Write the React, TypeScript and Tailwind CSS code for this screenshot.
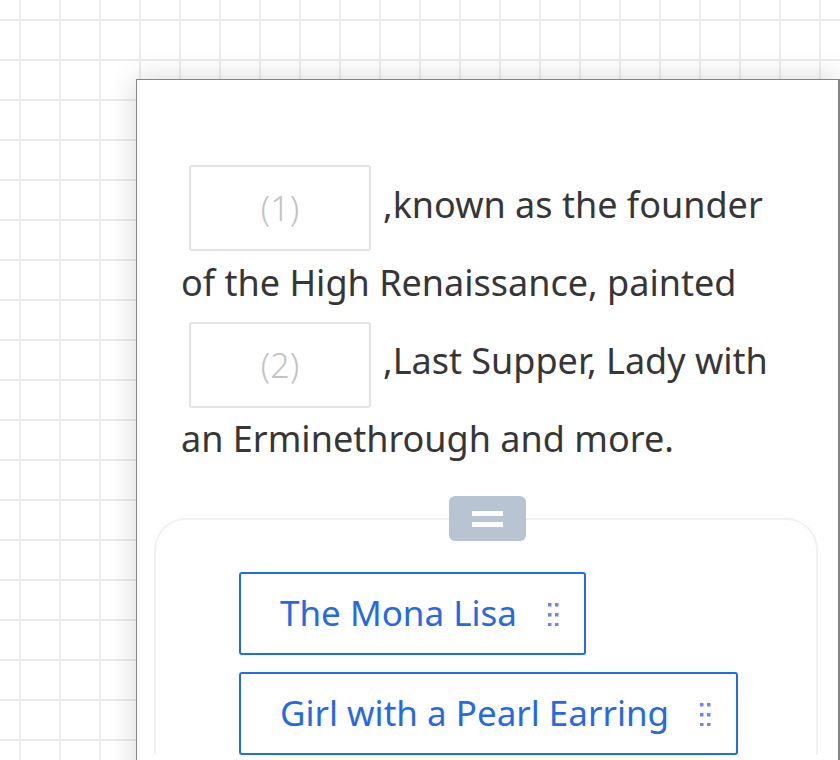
import React from "react"

const blanks = ["(1)", "(2)"]

function Blank({ label, drop }: { label: string; drop: string }) {
  return (
    <span
      className={`ml-[8px] mr-[12px] flex h-[86px] w-[182px] shrink-0 items-center justify-center rounded-[3px] border-2 border-[#e3e3e8] text-[34px] font-light text-[#c3c3c3] ${drop}`}
    >
      {label}
    </span>
  )
}

function Dots() {
  return (
    <svg width="11" height="24" viewBox="0 0 11 24" className="shrink-0">
      {[1, 11, 21].map((y) =>
        [0, 7].map((x) => (
          <rect key={`${x}-${y}`} x={x} y={y} width="3.5" height="3.5" fill="#6a86f0" />
        ))
      )}
    </svg>
  )
}

function Chip({ text }: { text: string }) {
  return (
    <div className="flex h-[83px] w-fit items-center gap-[31px] rounded-[3px] border-2 border-[#1e6ee8] pl-[39px] pr-[25px] text-[35px] text-[#2569e6]">
      <span>{text}</span>
      <Dots />
    </div>
  )
}

export default function App() {
  return (
    <div
      className="h-[760px] w-[840px] overflow-hidden bg-white bg-[linear-gradient(to_right,#ececec_2px,transparent_2px),linear-gradient(to_bottom,#ececec_2px,transparent_2px)] bg-[size:40px_40px] bg-[position:19px_19px] pl-[136px] pt-[79px]"
      style={{ fontFamily: '"Noto Sans", "Open Sans", sans-serif' }}
    >
      <div className="h-[720px] w-[704px] border border-r-2 border-[#858585] bg-white pt-[86px] text-[36px] text-[#363636] shadow-[0_0_28px_rgba(0,0,0,0.16)]">
        <div className="pl-[44px]">
          <div className="flex h-[78px] items-center">
            <Blank label={blanks[0]} drop="mt-[6px]" />
            <span>,known as the founder</span>
          </div>
          <div className="flex h-[78px] items-center">of the High Renaissance, painted</div>
          <div className="flex h-[78px] items-center">
            <Blank label={blanks[1]} drop="mt-[8px]" />
            <span>,Last Supper, Lady with</span>
          </div>
          <div className="flex h-[78px] items-center">an Erminethrough and more.</div>
        </div>

        <div className="mt-[18px] flex flex-col items-center">
          {/* drag handle sits on the sheet's top edge */}
          <div className="relative z-10 flex h-[45px] w-[77px] flex-col items-center justify-center gap-[6px] rounded-[6px] bg-[#b9c4d3]">
            <span className="h-[5px] w-[31px] bg-white" />
            <span className="h-[5px] w-[31px] bg-white" />
          </div>
          <div className="-mt-[23px] ml-[17px] mr-[20px] self-stretch rounded-t-[32px] border-2 border-b-0 border-[#f1f1f1] pl-[83px] pt-[52px]">
            <div className="flex flex-col gap-[17px]">
              <Chip text="The Mona Lisa" />
              <Chip text="Girl with a Pearl Earring" />
            </div>
          </div>
        </div>
      </div>
    </div>
  )
}
